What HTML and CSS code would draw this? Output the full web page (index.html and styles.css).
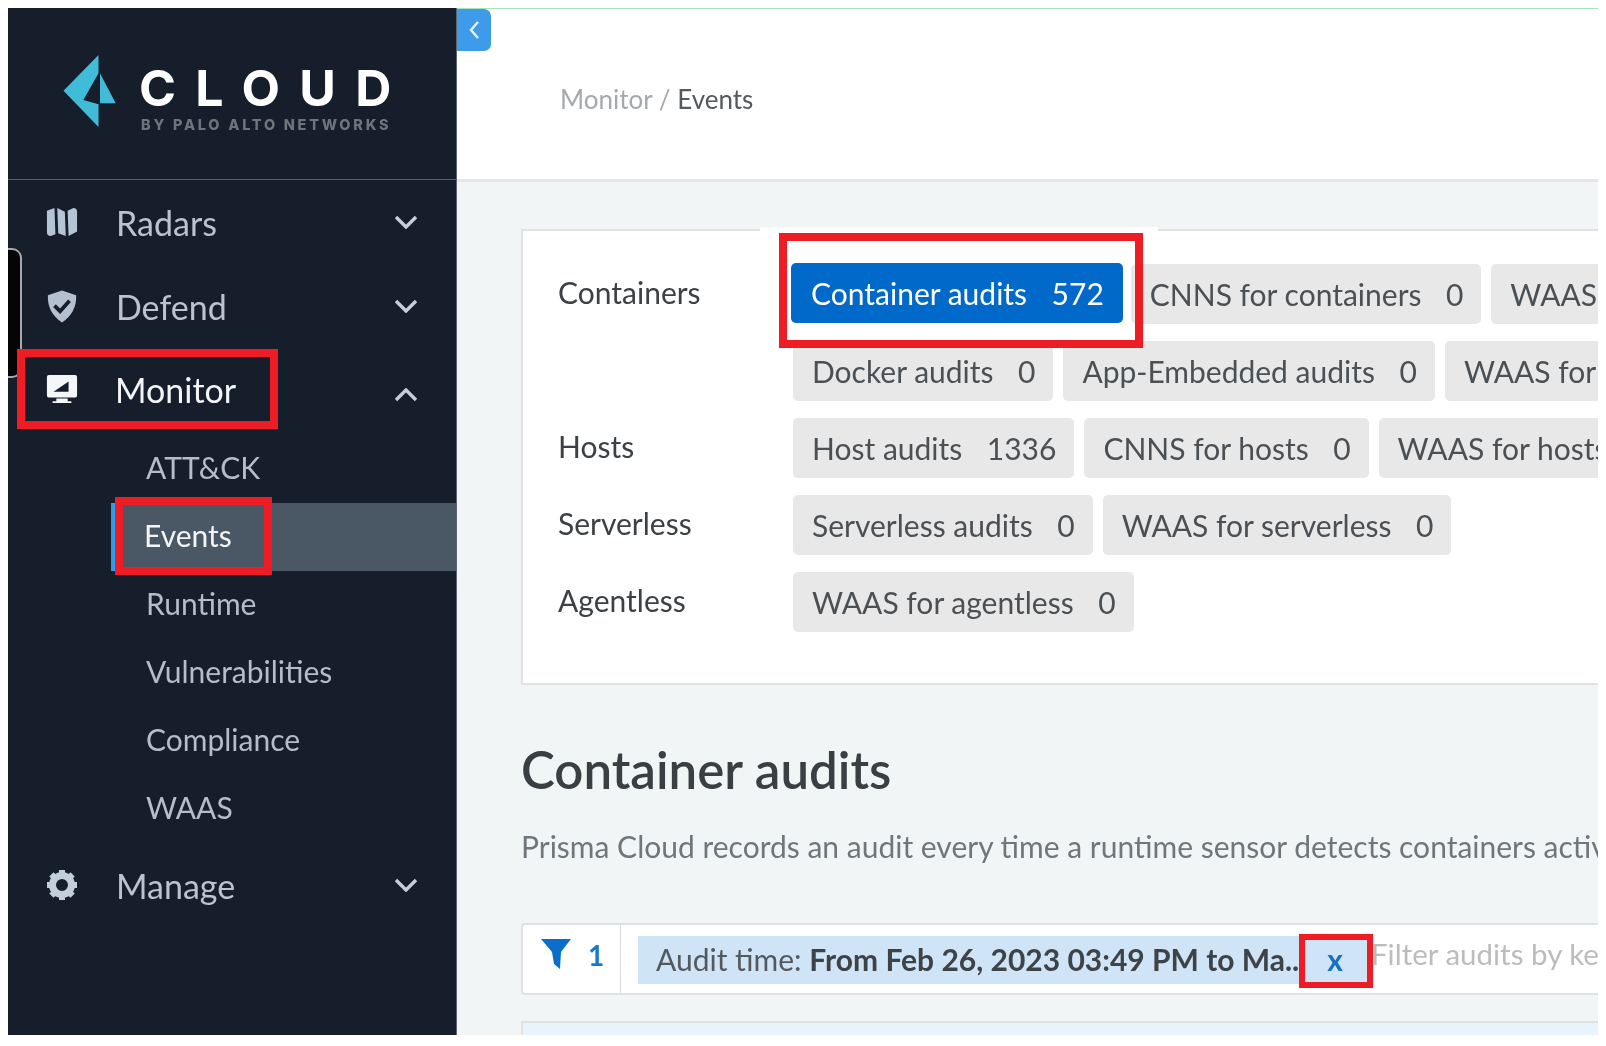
FILE: index.html
```html
<!DOCTYPE html>
<html lang="en">
<head>
    <meta charset="UTF-8">
    <meta name="viewport" content="width=device-width, initial-scale=1.0">
    <title>Monitor / Events</title>
    <link rel="stylesheet" href="styles.css">
</head>
<body>
    <div class="frame">
        <aside class="sidebar">
            <div class="brand">
                <svg class="brand-mark" viewBox="0 0 56 74" aria-hidden="true">
                    <path fill="#41bcd8" d="M35.5 0 L0.5 35.7 L35.5 72 L35.5 49.3 L20.3 45 L35.5 18.3 Z"/>
                    <path fill="#41bcd8" d="M37 18.3 L52.7 48.3 L37 48.3 Z"/>
                </svg>
                <div class="brand-text">
                    <div class="brand-name">CLOUD</div>
                    <div class="brand-sub">BY PALO ALTO NETWORKS</div>
                </div>
            </div>

            <nav class="menu">
                <div class="menu-item">
                    <svg class="menu-icon" viewBox="0 0 34 32" aria-hidden="true">
                        <path fill="#b4c6d6" d="M1 4 L9 1 L10 29 L5 31 Q1 31 1 27 Z M12 1 L20 5 L21 31 L13 28 Z M23 4 L29 1 Q33 1 33 5 L33 26 L24 31 Z"/>
                    </svg>
                    <span class="menu-label">Radars</span>
                    <svg class="chevron" viewBox="0 0 24 14" aria-hidden="true"><path d="M2 2 L12 12 L22 2"/></svg>
                </div>
                <div class="menu-item">
                    <svg class="menu-icon menu-icon-tall" viewBox="0 0 34 36" aria-hidden="true">
                        <path fill="#b4c0cf" d="M17 1 L32 6 Q33 24 17 35 Q1 24 2 6 Z"/>
                        <path fill="none" stroke="#161e2b" stroke-width="4" d="M9 17 L15 23 L25 12"/>
                    </svg>
                    <span class="menu-label">Defend</span>
                    <svg class="chevron" viewBox="0 0 24 14" aria-hidden="true"><path d="M2 2 L12 12 L22 2"/></svg>
                </div>
                <div class="menu-item is-open">
                    <svg class="menu-icon" viewBox="0 0 34 32" aria-hidden="true">
                        <path fill="#f4f6f8" d="M3 1 H31 Q33 1 33 3 V23 Q33 25 31 25 H3 Q1 25 1 23 V3 Q1 1 3 1 Z M11 26 H23 V29 H27 V31 H7 V29 H11 Z"/>
                        <path fill="#161e2b" d="M8 19 L24 8 L24 19 Z"/>
                    </svg>
                    <span class="menu-label">Monitor</span>
                    <svg class="chevron" viewBox="0 0 24 14" aria-hidden="true"><path d="M2 12 L12 2 L22 12"/></svg>
                </div>
                <div class="submenu">
                    <div class="submenu-item">ATT&amp;CK</div>
                    <div class="submenu-item is-active">Events</div>
                    <div class="submenu-item">Runtime</div>
                    <div class="submenu-item">Vulnerabilities</div>
                    <div class="submenu-item">Compliance</div>
                    <div class="submenu-item">WAAS</div>
                </div>
                <div class="menu-item">
                    <svg class="menu-icon" viewBox="0 0 32 32" aria-hidden="true">
                        <circle cx="16" cy="16" r="9.5" fill="none" stroke="#c3cedb" stroke-width="7"/>
                        <path fill="none" stroke="#c3cedb" stroke-width="6" d="M16 1 V5 M16 27 V31 M1 16 H5 M27 16 H31 M5.4 5.4 L8.2 8.2 M23.8 23.8 L26.6 26.6 M5.4 26.6 L8.2 23.8 M23.8 8.2 L26.6 5.4"/>
                    </svg>
                    <span class="menu-label">Manage</span>
                    <svg class="chevron" viewBox="0 0 24 14" aria-hidden="true"><path d="M2 2 L12 12 L22 2"/></svg>
                </div>
            </nav>
        </aside>

        <main class="main">
            <header class="topbar">
                <div class="crumbs"><span class="crumb-muted">Monitor / </span>Events</div>
            </header>

            <div class="content">
                <section class="card">
                    <div class="group">
                        <div class="group-label">Containers</div>
                        <div class="chips">
                            <div class="chip-row">
                                <span class="chip chip-on">Container audits<b>572</b></span>
                                <span class="chip">CNNS for containers<b>0</b></span>
                                <span class="chip">WAAS for containers<b>0</b></span>
                            </div>
                            <div class="chip-row">
                                <span class="chip">Docker audits<b>0</b></span>
                                <span class="chip">App-Embedded audits<b>0</b></span>
                                <span class="chip">WAAS for App-Embedded<b>0</b></span>
                            </div>
                        </div>
                    </div>
                    <div class="group">
                        <div class="group-label">Hosts</div>
                        <div class="chips">
                            <div class="chip-row">
                                <span class="chip">Host audits<b>1336</b></span>
                                <span class="chip">CNNS for hosts<b>0</b></span>
                                <span class="chip">WAAS for hosts<b>0</b></span>
                            </div>
                        </div>
                    </div>
                    <div class="group">
                        <div class="group-label">Serverless</div>
                        <div class="chips">
                            <div class="chip-row">
                                <span class="chip">Serverless audits<b>0</b></span>
                                <span class="chip">WAAS for serverless<b>0</b></span>
                            </div>
                        </div>
                    </div>
                    <div class="group">
                        <div class="group-label">Agentless</div>
                        <div class="chips">
                            <div class="chip-row">
                                <span class="chip">WAAS for agentless<b>0</b></span>
                            </div>
                        </div>
                    </div>
                </section>

                <h1 class="title">Container audits</h1>
                <p class="intro">Prisma Cloud records an audit every time a runtime sensor detects containers activity that deviates from the model.</p>

                <div class="filter-bar">
                    <div class="filter-count">
                        <svg class="funnel" viewBox="0 0 30 30" aria-hidden="true">
                            <path fill="#0a6fc9" d="M0 0 H30 L20 13 L19 30 L13 25 L11 13 Z"/>
                        </svg>
                        <span>1</span>
                    </div>
                    <div class="filter-body">
                        <span class="token">Audit time:&nbsp;<b>From Feb 26, 2023 03:49 PM to Ma..</b></span>
                        <span class="token-x">x</span>
                        <span class="filter-hint">Filter audits by keywords and attributes</span>
                    </div>
                </div>

                <div class="results"></div>
            </div>
        </main>

        <!-- things lying over the screenshot -->
        <button class="collapse" aria-label="Collapse">
            <svg viewBox="0 0 12 20" aria-hidden="true"><path d="M10 2 L3 10 L10 18"/></svg>
        </button>
        <div class="side-tab"></div>
        <div class="halo"></div>
        <div class="mark mark-monitor"></div>
        <div class="mark mark-events"></div>
        <div class="mark mark-audits"></div>
        <div class="mark mark-x"></div>
    </div>
</body>
</html>
```

FILE: styles.css
```css
/* Pagina */
* {
    box-sizing: border-box;
}

html, body {
    height: 100%;
}

body {
    margin: 0;
    padding: 8px 8px 11px 8px;
    background-color: #ffffff;
    font-family: Lato, "Open Sans", sans-serif;
    overflow: hidden;
}

.frame {
    position: relative;
    display: flex;
    height: 100%;
    overflow: hidden;
    filter: blur(0.5px); /* la captura original viene borrosa */
}

/* Barra lateral */
.sidebar {
    flex: 0 0 449px;
    background-color: #161e2b;
    color: #b9c4d0;
    border-right: 1px solid #5d6670;
}

.brand {
    display: flex;
    align-items: flex-start;
    height: 172px;
    padding: 47px 0 0 55px;
    border-bottom: 1px solid #565e69;
}

.brand-mark {
    width: 56px;
    height: 74px;
}

.brand-text {
    margin-left: 20px;
    padding-top: 9px;
}

.brand-name {
    font-family: Inter, sans-serif;
    font-size: 50px;
    font-weight: 700;
    line-height: 48px;
    letter-spacing: 19.3px;
    color: #ffffff;
}

.brand-sub {
    margin: 5px 0 0 2px;
    font-family: Inter, sans-serif;
    font-size: 14.5px;
    font-weight: 800;
    line-height: 16px;
    letter-spacing: 2.75px;
    color: #6f747b;
    white-space: nowrap;
}

.menu-item {
    display: flex;
    align-items: center;
    height: 84px;
    padding: 0 38px 0 38px;
}

.menu-icon {
    flex: 0 0 32px;
    width: 32px;
    height: 32px;
}

.menu-icon-tall {
    height: 37px;
}

.menu-label {
    flex: 1;
    margin-left: 38px;
    font-size: 34px;
}

.chevron {
    width: 24px;
    height: 14px;
    fill: none;
    stroke: #c6cfd9;
    stroke-width: 3.4;
}

.is-open {
    height: 87px;
    padding-bottom: 5px;
}

.is-open .menu-label {
    margin-left: 37px;
    color: #f2f4f6;
}

.is-open .chevron {
    margin-top: 12px;
}

.submenu-item {
    height: 68px;
    padding-left: 138px;
    font-size: 30px;
    line-height: 64px;
    color: #b4bdc8;
}

.submenu-item.is-active {
    margin-left: 103px;
    padding-left: 28px;
    background-color: #4a5764;
    border-left: 5px solid #2d9be5;
    color: #f2f4f6;
}

/* Contenido */
.main {
    flex: 1;
    min-width: 0;
    display: flex;
    flex-direction: column;
    border-top: 1px solid #a6e6bd;
}

.topbar {
    height: 173px;
    padding: 73px 0 0 103px;
    background-color: #ffffff;
    border-bottom: 3px solid #e3e5e6;
}

.crumbs {
    font-size: 26px;
    line-height: 34px;
    color: #55595e;
}

.crumb-muted {
    color: #a5a9ad;
}

.content {
    flex: 1;
    padding: 47px 0 0 64px;
    background-color: #f1f5f5;
    white-space: nowrap;
    overflow: hidden;
}

.card {
    height: 456px;
    padding: 33px 0 0 35px;
    background-color: #ffffff;
    border: 2px solid #dfe1e2;
    border-right: none;
}

.group {
    display: flex;
}

.group-label {
    flex: 0 0 235px;
    padding-top: 8px;
    font-size: 30px;
    line-height: 40px;
    color: #3c4146;
}

.chip-row {
    display: flex;
    gap: 10px;
    margin-bottom: 17px;
}

.chip {
    display: inline-flex;
    align-items: center;
    height: 60px;
    padding: 0 18px 0 19px;
    background-color: #e8e8e8;
    border-radius: 5px;
    font-size: 30px;
    color: #4b5055;
}

.chip b {
    margin-left: 24.5px;
    font-weight: 400;
}

.chip-on {
    margin: -1px -2px 0 -2px;
    padding: 0 19px 0 20px;
    background-color: #0069c9;
    color: #ffffff;
}

.title {
    margin: 52px 0 0 0;
    font-size: 51px;
    font-weight: 600;
    line-height: 66px;
    color: #3a3f44;
}

.intro {
    margin: 23px 0 0 0;
    font-size: 30px;
    line-height: 40px;
    color: #70767b;
}

/* Filtro */
.filter-bar {
    display: flex;
    height: 72px;
    margin-top: 57px;
    background-color: #ffffff;
    border: 2px solid #dfe1e2;
    border-right: none;
    border-radius: 4px 0 0 4px;
}

.filter-count {
    display: flex;
    flex: 0 0 98px;
    gap: 17px;
    padding: 14px 0 0 18px;
    border-right: 1px solid #d9dbdc;
    font-size: 28px;
    font-weight: 700;
    line-height: 32px;
    color: #1a78cf;
}

.funnel {
    width: 30px;
    height: 30px;
}

.filter-body {
    display: flex;
    align-items: flex-start;
    padding: 11px 0 0 17px;
}

.token {
    flex: 0 0 660px;
    height: 48px;
    padding: 0 0 0 18px;
    background-color: #cfe4f7;
    font-size: 30px;
    line-height: 46px;
    color: #54595e;
    overflow: hidden;
}

.token b {
    font-weight: 700;
    color: #3e4348;
}

.token-x {
    flex: 0 0 74px;
    height: 48px;
    background-color: #cfe4f7;
    font-size: 30px;
    font-weight: 700;
    line-height: 46px;
    text-align: center;
    color: #1670c8;
}

.filter-hint {
    margin-left: -1px;
    font-size: 29.5px;
    line-height: 36px;
    color: #bcbcbc;
}

.results {
    height: 40px;
    margin-top: 26px;
    background-color: #e8f3fc;
    border: 2px solid #dfe1e2;
    border-right: none;
}

/* Encima del contenido */
.collapse {
    position: absolute;
    left: 449px;
    top: 1px;
    width: 34px;
    height: 42px;
    padding: 0;
    border: none;
    border-radius: 0 7px 7px 0;
    background-color: #3d9be9;
}

.collapse svg {
    display: block;
    width: 12px;
    height: 20px;
    margin: 0 auto;
    fill: none;
    stroke: #e8f3fc;
    stroke-width: 2.4;
}

.side-tab {
    position: absolute;
    left: 0;
    top: 240px;
    width: 14px;
    height: 130px;
    background-color: #050505;
    border: 2px solid #a9a9ad;
    border-left: none;
    border-radius: 0 10px 10px 0;
}

.halo {
    position: absolute;
    left: 752px;
    top: 219px;
    width: 398px;
    height: 10px;
    background-color: #ffffff;
}

.mark {
    position: absolute;
    border: 8px solid #ee1c25;
}

.mark-monitor {
    left: 9px;
    top: 341px;
    width: 261px;
    height: 80px;
}

.mark-events {
    left: 107px;
    top: 489px;
    width: 157px;
    height: 78px;
}

.mark-audits {
    left: 771px;
    top: 225px;
    width: 364px;
    height: 115px;
}

.mark-x {
    left: 1291px;
    top: 926px;
    width: 74px;
    height: 54px;
    border-width: 6px;
}
```
